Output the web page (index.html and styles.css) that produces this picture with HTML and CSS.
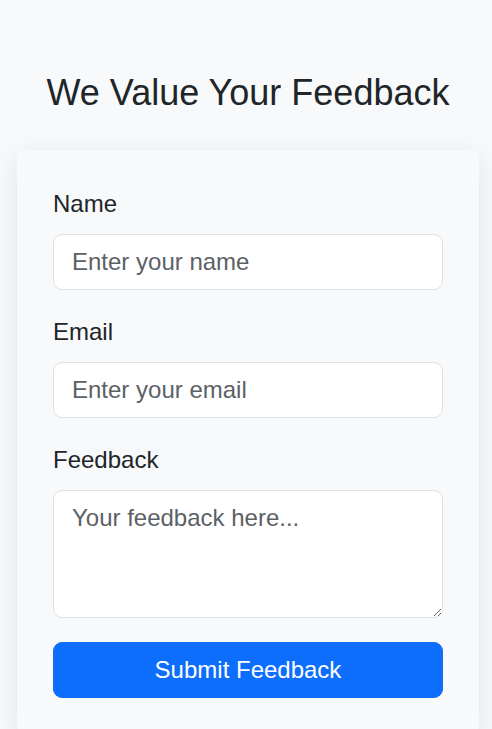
FILE: index.html
```html
<!DOCTYPE html>
<html lang="en">
<head>
<meta charset="utf-8">
<title>Feedback</title>
<link rel="stylesheet" href="styles.css">
</head>
<body>
<main class="page">
  <h1 class="title">We Value Your Feedback</h1>
  <form class="card">
    <div class="group">
      <label class="label" for="name">Name</label>
      <input class="control" id="name" type="text" placeholder="Enter your name">
    </div>
    <div class="group">
      <label class="label" for="email">Email</label>
      <input class="control" id="email" type="email" placeholder="Enter your email">
    </div>
    <div class="group">
      <label class="label" for="fb">Feedback</label>
      <textarea class="control area" id="fb" rows="3" placeholder="Your feedback here..."></textarea>
    </div>
    <button class="submit" type="button">Submit Feedback</button>
  </form>
</main>
</body>
</html>
```
FILE: styles.css
```css
* { box-sizing: border-box; }
html, body { margin: 0; padding: 0; }
body {
  background: #f8f9fa;
  font-family: "Liberation Sans", Arial, sans-serif;
  color: #212529;
  font-size: 24px;
  line-height: 1.5;
}
.page {
  padding: 71px 13px 0 17px;
}
.title {
  margin: 0 0 36px;
  font-size: 36px;
  font-weight: 400;
  line-height: 1.2;
  text-align: center;
}
.card {
  background: #f8f9fa;
  border-radius: 9px;
  box-shadow: 0 6px 28px rgba(0, 0, 0, 0.09);
  padding: 36px 36px 36px;
}
.group { margin-bottom: 24px; }
.label {
  display: block;
  margin-bottom: 12px;
  font-size: 24px;
  line-height: 36px;
}
.control {
  display: block;
  width: 100%;
  height: 56px;
  padding: 9px 18px;
  font: inherit;
  font-size: 24px;
  line-height: 36px;
  color: #212529;
  background: #fff;
  border: 1px solid #dee2e6;
  border-radius: 9px;
  outline: none;
}
.control::placeholder { color: #5c6166; opacity: 1; }
.area {
  height: 128px;
  resize: vertical;
}
.submit {
  display: block;
  width: 100%;
  height: 56px;
  padding: 9px 18px;
  font: inherit;
  font-size: 24px;
  line-height: 36px;
  color: #fff;
  background: #0d6efd;
  border: 1px solid #0d6efd;
  border-radius: 9px;
}
```
